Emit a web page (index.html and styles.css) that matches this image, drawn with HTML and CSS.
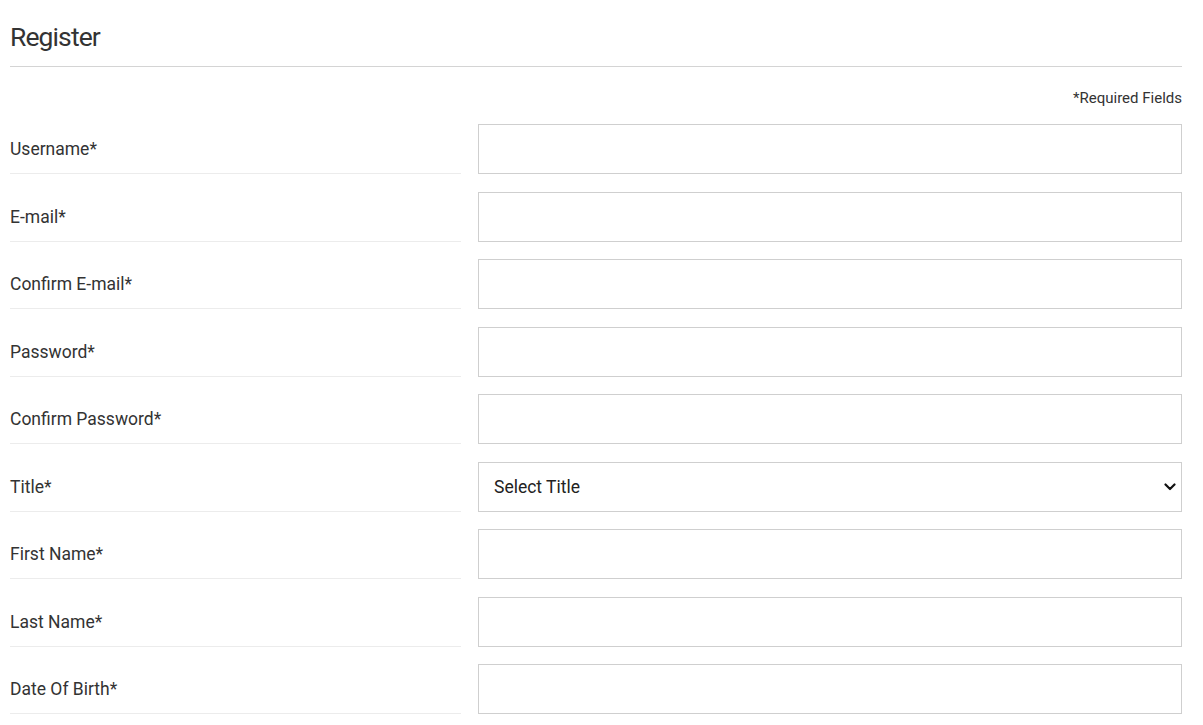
FILE: index.html
```html
<!DOCTYPE html>
<html>
<head>
<meta charset="utf-8">
<link rel="stylesheet" href="styles.css">
</head>
<body>
<div class="page">
  <h1 class="title">Register</h1>
  <div class="req">*Required Fields</div>
  <form class="form">
    <div class="row"><label class="label">Username*</label><input class="field" type="text"></div>
    <div class="row"><label class="label">E-mail*</label><input class="field" type="text"></div>
    <div class="row"><label class="label">Confirm E-mail*</label><input class="field" type="text"></div>
    <div class="row"><label class="label">Password*</label><input class="field" type="password"></div>
    <div class="row"><label class="label">Confirm Password*</label><input class="field" type="password"></div>
    <div class="row"><label class="label">Title*</label>
      <div class="select-wrap">
        <select class="field select"><option>Select Title</option></select>
        <svg class="chev" width="12" height="8" viewBox="0 0 12 8"><path d="M1.5 1.5 L6 6 L10.5 1.5" fill="none" stroke="#111" stroke-width="2.2" stroke-linecap="round" stroke-linejoin="round"/></svg>
      </div>
    </div>
    <div class="row"><label class="label">First Name*</label><input class="field" type="text"></div>
    <div class="row"><label class="label">Last Name*</label><input class="field" type="text"></div>
    <div class="row"><label class="label">Date Of Birth*</label><input class="field" type="text"></div>
  </form>
</div>
</body>
</html>
```
FILE: styles.css
```css
html, body {
  margin: 0;
  padding: 0;
  background: #fff;
}
body {
  font-family: Roboto, "Liberation Sans", sans-serif;
  color: #333;
}
.page {
  padding: 0 21px 0 10px;
}
.title {
  margin: 0;
  padding: 21px 0 13px;
  font-size: 26.5px;
  font-weight: 400;
  line-height: 32px;
  color: #333;
  letter-spacing: -0.9px;
  border-bottom: 1px solid #d4d4d4;
}
.req {
  text-align: right;
  font-size: 15px;
  line-height: 18px;
  margin-top: 22px;
  color: #333;
}
.form {
  margin-top: 17px;
  display: flex;
  flex-direction: column;
  gap: 17.5px;
}
.row {
  display: flex;
  gap: 17px;
  height: 50px;
}
.label {
  width: 451px;
  flex: none;
  box-sizing: border-box;
  border-bottom: 1px solid #ececec;
  font-size: 17.5px;
  line-height: 50px;
  color: #333;
}
.field {
  flex: 1;
  height: 50px;
  box-sizing: border-box;
  border: 1px solid #cfcfcf;
  border-radius: 0;
  background: #fff;
  outline: none;
  font-family: Roboto, "Liberation Sans", sans-serif;
  font-size: 17.5px;
  padding: 0 15px;
  margin: 0;
}
.select-wrap {
  flex: 1;
  position: relative;
  display: flex;
}
.select {
  -webkit-appearance: none;
  appearance: none;
  color: #222;
  padding-left: 15px;
  padding-right: 30px;
  width: 100%;
}
.chev {
  position: absolute;
  right: 6px;
  top: 21px;
  pointer-events: none;
}
```
